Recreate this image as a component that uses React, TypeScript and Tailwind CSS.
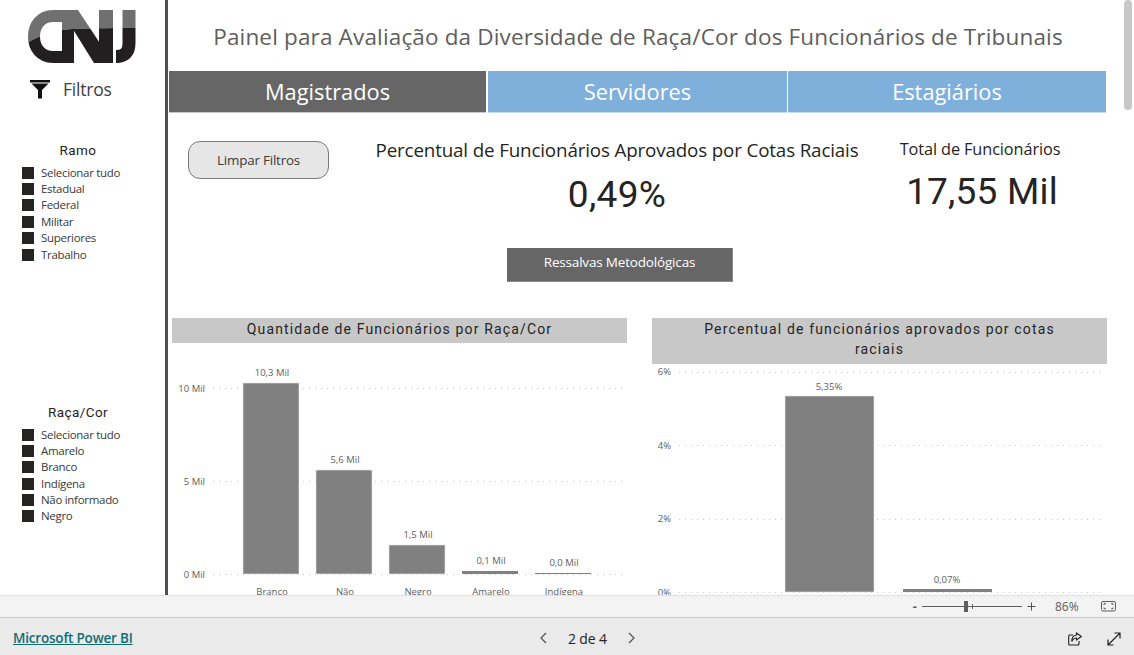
import React from "react";

const seg = "font-['Open_Sans','Liberation_Sans',sans-serif]";
const din = "font-['Roboto','Liberation_Sans',sans-serif]";

function Logo() {
  const shapes = (
    <>
      <path d="M42 6 H26 C14 6 7 15 7 26.5 C7 38 14 47 26 47 H37" fill="none" strokeWidth="12" />
      <path d="M35 53 V8 H47 V53 Z" stroke="none" />
      <path d="M34 0 H51 L86 53 H67 Z" stroke="none" />
      <path d="M72 0 H86 V53 H72 Z" stroke="none" />
      <path d="M102 0 V33 C102 43 97 46.5 89 46.5" fill="none" strokeWidth="13" />
    </>
  );
  return (
    <svg width="110" height="54" viewBox="0 0 110 54" className="ml-[27px] mt-[10px] block">
      <defs>
        <clipPath id="lt"><path d="M0 0 H110 V18 C90 18 70 18 45 19 C30 20 15 24 0 33 Z" /></clipPath>
        <clipPath id="lb"><path d="M0 33 C15 24 30 20 45 19 C70 18 90 18 110 18 V54 H0 Z" /></clipPath>
      </defs>
      <g clipPath="url(#lt)" stroke="#707070" fill="#707070">{shapes}</g>
      <g clipPath="url(#lb)" stroke="#231f20" fill="#231f20">{shapes}</g>
    </svg>
  );
}

function Slicer({ title, items, className }: { title: string; items: string[]; className: string }) {
  return (
    <div className={className}>
      <div className={`${din} text-[13.5px] leading-[16px] text-[#252423] text-center w-[156px] tracking-[0.4px]`}>{title}</div>
      <div className="mt-[6.5px] ml-[22px] flex flex-col">
        {items.map((t) => (
          <div key={t} className="flex items-center h-[16.4px] gap-[7px]">
            <span className="w-[12px] h-[12px] bg-[#252423] shrink-0" />
            <span className={`${seg} text-[11.5px] leading-[16px] text-[#3a3a3a] tracking-[-0.3px] whitespace-nowrap`}>{t}</span>
          </div>
        ))}
      </div>
    </div>
  );
}

const txt = { fontFamily: "'Open Sans','Liberation Sans',sans-serif" };

function Grid({ x1, x2, y }: { x1: number; x2: number; y: number }) {
  return <line x1={x1} x2={x2} y1={y + 0.5} y2={y + 0.5} stroke="#c8c8c8" strokeDasharray="1 5" />;
}

function Chart1() {
  const bars = [
    { x: 71, y: 40, h: 191, v: "10,3 Mil", c: "Branco" },
    { x: 144, y: 127, h: 104, v: "5,6 Mil", c: "Não" },
    { x: 217, y: 202, h: 29, v: "1,5 Mil", c: "Negro" },
    { x: 290, y: 228, h: 3, v: "0,1 Mil", c: "Amarelo" },
    { x: 363, y: 230, h: 1, v: "0,0 Mil", c: "Indígena" },
  ];
  return (
    <svg width="455" height="252" viewBox="0 0 455 252" className="block" style={txt}>
      {[45, 138, 231].map((y) => <Grid key={y} x1={41} x2={450} y={y} />)}
      {[["10 Mil", 49], ["5 Mil", 142], ["0 Mil", 235]].map(([t, y]) => (
        <text key={t as string} x={33} y={y as number} textAnchor="end" fontSize="9.5" fill="#605e5c">{t}</text>
      ))}
      {bars.map((b) => (
        <g key={b.c}>
          <rect x={b.x} y={b.y} width="56" height={b.h} fill="#808080" stroke={b.h > 10 ? "#e6e6e6" : "none"} strokeWidth="0.6" />
          <text x={b.x + 29} y={b.y - 7} textAnchor="middle" fontSize="9.5" fill="#605e5c">{b.v}</text>
          <text x={b.x + 29} y={252} textAnchor="middle" fontSize="9.5" fill="#605e5c">{b.c}</text>
        </g>
      ))}
    </svg>
  );
}

function Chart2() {
  return (
    <svg width="455" height="231" viewBox="0 0 455 231" className="block" style={txt}>
      {[8, 81, 155, 228].map((y) => <Grid key={y} x1={27} x2={450} y={y} />)}
      {[["6%", 11], ["4%", 85], ["2%", 158], ["0%", 232]].map(([t, y]) => (
        <text key={t as string} x={19} y={y as number} textAnchor="end" fontSize="9.5" fill="#605e5c">{t}</text>
      ))}
      <rect x={133} y={32} width="89" height="196" fill="#808080" stroke="#e6e6e6" strokeWidth="0.6" />
      <text x={177} y={26} textAnchor="middle" fontSize="9.5" fill="#605e5c">5,35%</text>
      <rect x={251} y={225} width="89" height="3" fill="#808080" />
      <text x={295} y={219} textAnchor="middle" fontSize="9.5" fill="#605e5c">0,07%</text>
    </svg>
  );
}

export default function App() {
  return (
    <div className="w-[1134px] h-[655px] flex flex-col overflow-hidden bg-white relative">
      <div className="h-[595px] flex shrink-0 overflow-hidden">
        <aside className="w-[165px] shrink-0 flex flex-col">
          <Logo />
          <div className="flex items-center mt-[12px] ml-[30px] h-[26px]">
            <svg width="20" height="20" viewBox="0 0 20 20" className="block">
              <path d="M0 1 H20 V3.5 H0 Z M1.5 4.5 H18.5 L12 11 V19.5 H8 V11 Z" fill="#111" />
            </svg>
            <span className={`${seg} ml-[13px] text-[17.5px] leading-[20px] text-[#3f3f3f] tracking-[-0.2px]`}>Filtros</span>
          </div>
          <Slicer className="mt-[40px]" title="Ramo" items={["Selecionar tudo", "Estadual", "Federal", "Militar", "Superiores", "Trabalho"]} />
          <Slicer className="mt-[141px]" title="Raça/Cor" items={["Selecionar tudo", "Amarelo", "Branco", "Indígena", "Não informado", "Negro"]} />
        </aside>
        <div className="w-[3px] shrink-0 bg-[#4f4f4f] -mr-[1px]" />
        <main className="flex-1 min-w-0 pl-[2px]">
          <h1 className={`${seg} h-[71px] w-[938px] flex items-center justify-center pt-[3px] font-normal text-[22.5px] text-[#605e5c] tracking-[0.16px] whitespace-nowrap`}>
            Painel para Avaliação da Diversidade de Raça/Cor dos Funcionários de Tribunais
          </h1>
          <nav className={`${seg} flex w-[937px] h-[42px] text-[21.8px] text-white`}>
            <div className="w-[317px] h-full bg-[#666666] flex items-center justify-center pt-[2px] border-b border-[#c8c8c8]">Magistrados</div>
            <div className="w-[2px]" />
            <div className="w-[299px] h-full bg-[#7fb0dc] flex items-center justify-center pt-[2px] border-b border-[#c8dcf0]">Servidores</div>
            <div className="w-[1px]" />
            <div className="w-[318px] h-full bg-[#7fb0dc] flex items-center justify-center pt-[2px] border-b border-[#c8dcf0]">Estagiários</div>
          </nav>
          <section className="flex h-[205px] w-[938px]">
            <div className="w-[188px] shrink-0 pl-[19px] pt-[28px]">
              <button className={`${seg} w-[141px] h-[38px] rounded-[12px] border border-[#7a7a7a] bg-[#e6e6e6] text-[13.4px] text-[#3a3a3a] tracking-[-0.2px]`}>Limpar Filtros</button>
            </div>
            <div className="w-[520px] shrink-0 flex flex-col items-center">
              <div className={`${seg} mt-[25px] text-[18.8px] leading-[24px] text-[#252423] tracking-[-0.15px] whitespace-nowrap`}>Percentual de Funcionários Aprovados por Cotas Raciais</div>
              <div className={`${din} mt-[11px] text-[37px] leading-[44px] font-normal text-[#252423] tracking-[0.3px]`}>0,49%</div>
              <div className={`${seg} mt-[31px] w-[226px] h-[34px] bg-[#666666] border-b border-r border-[#8a8a8a] flex items-center justify-center text-[13.5px] text-white tracking-[-0.18px] ml-[6px] pb-[4px]`}>Ressalvas Metodológicas</div>
            </div>
            <div className="flex-1 flex flex-col items-center">
              <div className={`${seg} mt-[25px] text-[16.3px] leading-[22px] text-[#252423] tracking-[-0.1px] whitespace-nowrap -ml-[24px]`}>Total de Funcionários</div>
              <div className={`${din} mt-[10px] text-[37px] leading-[44px] font-normal text-[#252423] tracking-[0.2px] -ml-[20px]`}>17,55 Mil</div>
            </div>
          </section>
          <section className="flex w-[938px] pl-[3px] gap-[25px] items-start">
            <div className="w-[455px] shrink-0">
              <h2 className={`${din} h-[25px] bg-[#c8c8c8] flex items-center justify-center pb-[3px] font-normal text-[14px] text-[#252423] tracking-[1.15px] whitespace-nowrap`}>Quantidade de Funcionários por Raça/Cor</h2>
              <Chart1 />
            </div>
            <div className="w-[455px] shrink-0">
              <h2 className={`${din} h-[46px] bg-[#c8c8c8] text-center px-[40px] pt-[1px] font-normal text-[14px] leading-[20px] text-[#252423] tracking-[1.15px]`}>Percentual de funcionários aprovados por cotas raciais</h2>
              <Chart2 />
            </div>
          </section>
        </main>
      </div>

      <div className="h-[23px] shrink-0 bg-[#f3f3f3] border-t border-[#e0e0e0] border-b-[1px] border-b-[#c8c8c8] flex items-center justify-end text-[#605e5c]">
        <span className="text-[13px] font-bold leading-none mr-[5px]">-</span>
        <div className="relative w-[100px] h-[1px] bg-[#605e5c] mr-[5px]">
          <span className="absolute left-[42px] -top-[5px] w-[4px] h-[11px] bg-[#605e5c]" />
          <span className="absolute left-[50px] -top-[2px] w-[1px] h-[5px] bg-[#605e5c]" />
        </div>
        <svg width="9" height="9" viewBox="0 0 9 9" className="mr-[19px] block"><path d="M4.5 0.5 V8.5 M0.5 4.5 H8.5" stroke="#505050" fill="none" /></svg>
        <span className={`${seg} text-[12px] text-[#605e5c] w-[31px] mr-[15px]`}>86%</span>
        <svg width="15" height="11" viewBox="0 0 15 11" className="mr-[18px] block" fill="none" stroke="#605e5c">
          <rect x="0.5" y="0.5" width="14" height="9.5" rx="1.5" />
          <path d="M3 4 V2.7 H5 M10 2.7 H12 V4 M3 6.5 V7.8 H5 M10 7.8 H12 V6.5" />
        </svg>
      </div>

      <footer className="flex-1 bg-[#eaeaea] relative flex items-center pt-[4px]">
        <a className={`${seg} ml-[13px] text-[13.5px] font-semibold text-[#0f6f75] underline tracking-[-0.2px]`}>Microsoft Power BI</a>
        <div className="absolute left-[539px] top-0 h-full flex items-center pt-[3px]">
          <svg width="10" height="12" viewBox="0 0 10 12" className="block"><path d="M7 1 L2 6 L7 11" fill="none" stroke="#505050" strokeWidth="1.2" /></svg>
          <span className={`${seg} ml-[19px] text-[14px] font-medium text-[#252423] tracking-[-0.15px]`}>2 de 4</span>
          <svg width="10" height="12" viewBox="0 0 10 12" className="ml-[19px] block"><path d="M3 1 L8 6 L3 11" fill="none" stroke="#505050" strokeWidth="1.2" /></svg>
        </div>
        <div className="ml-auto flex items-center mr-[13px] gap-[25px]">
          <svg width="14" height="14" viewBox="0 0 14 14" className="block" fill="none" stroke="#222" strokeWidth="1.1">
            <path d="M5 3 H1.5 Q0.7 3 0.7 4 V12 Q0.7 13 1.5 13 H10 Q11 13 11 12 V9" />
            <path d="M8.5 1 L13.3 4.5 L8.5 8 V6 C6.5 6 5 7 3.8 9.5 C3.8 6 5.5 3.3 8.5 3 Z" />
          </svg>
          <svg width="14" height="14" viewBox="0 0 14 14" className="block" fill="none" stroke="#222" strokeWidth="1.2">
            <path d="M1 13 L13 1 M7.5 1 H13 V6.5 M1 7.5 V13 H6.5" />
          </svg>
        </div>
      </footer>
      <div className="absolute left-[1124px] top-0 w-[8px] h-[110px] rounded-[4px] bg-[#c8c8c8]" />
    </div>
  );
}
